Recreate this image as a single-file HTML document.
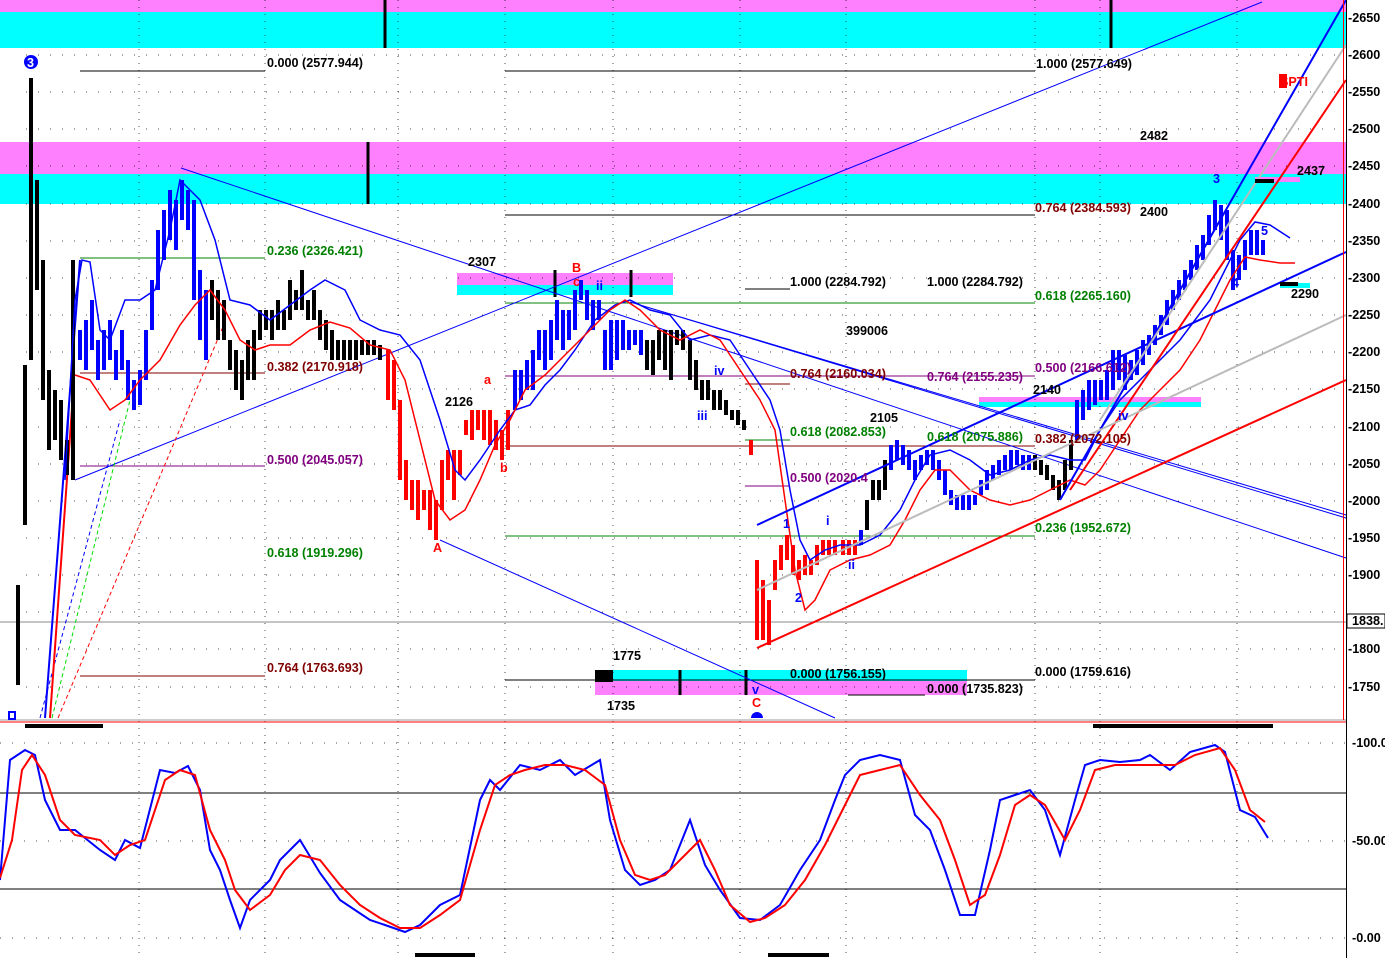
<!DOCTYPE html>
<html><head><meta charset="utf-8"><style>
html,body{margin:0;padding:0;background:#fff;width:1385px;height:958px;overflow:hidden}
svg{display:block}
text{font-family:"Liberation Sans",Arial,sans-serif;font-weight:bold;font-size:12.6px}
</style></head><body>
<svg width="1385" height="958" viewBox="0 0 1385 958" xmlns="http://www.w3.org/2000/svg">
<rect x="0" y="0" width="1346" height="12" fill="#ff80ff"/>
<rect x="0" y="12" width="1346" height="36" fill="#00ffff"/>
<rect x="0" y="142" width="1346" height="32" fill="#ff80ff"/>
<rect x="0" y="174" width="1346" height="30" fill="#00ffff"/>
<rect x="457" y="273" width="216" height="12" fill="#ff80ff"/>
<rect x="457" y="285" width="216" height="10" fill="#00ffff"/>
<rect x="595" y="670" width="372" height="11" fill="#00ffff"/>
<rect x="595" y="681" width="372" height="14" fill="#ff80ff"/>
<rect x="979" y="397" width="222" height="5" fill="#ff80ff"/>
<rect x="979" y="402" width="222" height="5" fill="#00ffff"/>
<rect x="1255" y="177" width="45" height="5" fill="#ff80ff"/>
<rect x="1280" y="283" width="30" height="5" fill="#00ffff"/>
<g stroke="#000" stroke-width="1" stroke-dasharray="1,11" opacity="0.7">
<path d="M26 55H1346M26 92H1346M26 129H1346M26 166H1346M26 204H1346M26 241H1346M26 278H1346M26 315H1346M26 352H1346M26 389H1346M26 427H1346M26 464H1346M26 501H1346M26 538H1346M26 575H1346M26 612H1346M26 649H1346M26 687H1346"/>
<path d="M0 743H1346M0 841H1346M0 938H1346"/>
</g>
<g stroke="#000" stroke-width="1" stroke-dasharray="1,6" opacity="0.7">
<path d="M139 0V958M265 0V958M398 0V958M505 0V958M613 0V958M740 0V958M846 0V958M1035 0V958M1100 0V958M1237 0V958"/>
</g>
<path d="M385 0V48M1111 0V48M368 142V204M555 270V297M631 270V297M680 670V695M746 670V695" stroke="#000" stroke-width="3"/>
<rect x="595" y="670" width="18" height="12" fill="#000"/>
<g stroke-width="1">
<path d="M80 71H265M505 71H1035M505 215H1035M745 289H790M505 680H1035M848 695H925" stroke="#000"/>
<path d="M80 258H265" stroke="#008000"/>
<path d="M505 303H1035M505 536H1035M745 440H790" stroke="#008000"/>
<path d="M80 373H265M80 676H265M505 446H1035M745 384H790" stroke="#800000"/>
<path d="M80 466H265M505 376H1035M745 486H790" stroke="#800080"/>
<path d="M0 622H1346" stroke="#888"/>
</g>
<g stroke="#0000ff" stroke-width="1" fill="none">
<path d="M181 168L1346 558M75 480L1262 2M440 540L835 718M630 302L1346 515M640 305L1346 518"/>
</g>
<polyline points="40,718 120,420" stroke="#0000ff" stroke-width="1" fill="none" stroke-dasharray="4,3"/>
<polyline points="52,718 130,400" stroke="#00dd00" stroke-width="1" fill="none" stroke-dasharray="4,3"/>
<polyline points="58,718 225,322" stroke="#ff0000" stroke-width="1" fill="none" stroke-dasharray="4,3"/>
<path d="M45 718L80 260" stroke="#0000ff" stroke-width="2"/>
<path d="M50 718L74 380" stroke="#ff0000" stroke-width="2"/>
<g stroke-width="4" fill="none">
<path stroke="#000" d="M18 585V685M25 365V525M31 78V360M37 180V290M43 260V400M49 370V450M55 390V440M61 400V460M67 440V475M73 260V480"/>
<path stroke="#0000ff" d="M80 330V360M86 320V370M92 300V350M98 340V380M104 330V370M110 320V360M116 350V380M122 330V370M128 360V400M134 380V410M140 370V405M146 330V380M152 280V330M158 230V290M164 210V260M170 190V240M176 200V250M182 180V220M188 190V230M194 200V300M200 270V340M206 290V360"/>
<path stroke="#000" d="M212 280V320M218 290V340M224 300V340M230 340V370M236 350V390M242 360V400M248 340V380M254 330V380M260 310V340M266 310V330M272 310V340M278 300V330M284 310V330M290 280V320M296 290V310M302 270V310M308 300V320M314 290V320M320 310V340M326 320V350M332 330V360M338 340V360M344 340V360M350 340V360M356 340V360M362 340V355M368 340V355M374 340V355M380 345V360"/>
<path stroke="#ff0000" d="M388 350V400M394 360V410M400 400V480M406 460V500M412 480V510M418 480V520M424 490V510M430 490V530M436 500V540M442 460V510M448 450V480M454 450V500M460 450V475M466 420V435M472 410V440M478 410V430M484 410V440M490 410V445M496 420V450M502 430V460M508 410V450"/>
<path stroke="#0000ff" d="M515 370V410M521 370V400M527 360V390M533 350V390M539 330V360M545 330V370M551 320V360M557 300V340M563 310V350M569 310V340M575 290V330M581 280V300M587 290V320M593 300V330M599 300V320M605 330V370M611 320V370M617 320V360M623 320V350M629 330V350M635 330V345M641 330V355"/>
<path stroke="#000" d="M647 340V370M653 340V375M659 330V360M665 330V370M671 330V380M677 330V345M683 330V350M690 340V380M696 360V390M702 380V400M708 380V400M714 390V410M720 390V410M726 400V415M732 410V420M738 410V425M744 420V430"/>
<path stroke="#ff0000" d="M751 440V455M757 560V640M763 580V640M769 600V645M775 560V590M781 545V570M787 535V560M793 545V575M799 560V580M805 555V575M811 560V575M817 545V565M823 540V555M829 540V555M835 540V555M843 540V555M849 540V555M855 540V555"/>
<path stroke="#000" d="M867 500V530M873 480V500M879 480V500M885 460V490M1035 455V470M1041 460V475M1047 465V480M1053 475V490M1059 480V500M1065 460V490M1071 440V470"/>
<path stroke="#0000ff" d="M861 530V545M891 445V470M897 440V460M903 445V465M909 450V470M915 460V480M921 455V470M927 450V465M933 450V470M939 460V480M945 470V495M951 490V505M957 495V510M963 495V510M969 495V510M975 495V505M981 480V495M987 470V490M993 465V480M999 460V475M1005 455V470M1011 450V470M1017 450V465M1023 455V470M1029 455V470M1077 400V440M1083 390V420M1089 380V410M1095 380V405M1101 380V400M1107 370V400M1113 350V390M1119 350V380M1125 355V390M1131 360V380M1137 350V375M1143 340V365M1149 335V355M1155 325V345M1161 315V335M1167 300V325M1173 290V310M1179 280V300M1185 270V290M1191 260V280M1197 245V270M1203 235V260M1209 215V245M1215 200V230M1221 205V240M1227 210V260M1233 250V290M1239 255V280M1245 240V270M1251 230V255M1257 230V255M1263 240V255"/>
</g>
<polyline fill="none" stroke="#0000ff" stroke-width="1.5" points="65,480 75,300 82,260 90,262 100,330 110,340 125,300 140,300 155,290 170,230 180,180 190,190 200,200 215,240 230,300 250,305 270,320 290,305 310,290 325,280 345,290 360,320 380,330 400,335 420,360 440,420 455,470 465,480 480,460 500,430 515,410 530,405 545,385 560,370 575,350 595,320 615,305 630,300 650,310 670,315 690,340 710,335 730,340 750,370 770,400 780,430 790,490 800,540 810,560 825,550 840,545 860,545 880,535 900,510 915,480 930,455 950,450 970,460 990,475 1010,470 1030,460 1050,455 1070,460 1085,460 1100,430 1120,400 1140,380 1160,360 1180,340 1195,320 1210,300 1225,270 1240,240 1255,222 1270,225 1290,238"/>
<polyline fill="none" stroke="#ff0000" stroke-width="1.5" points="75,375 90,380 110,410 125,400 140,380 160,360 180,325 195,305 210,290 225,310 240,340 255,350 270,345 290,345 310,330 330,322 350,328 370,345 390,350 405,380 420,440 435,500 450,520 465,510 480,480 495,445 510,420 525,390 545,375 570,350 590,330 610,310 625,300 640,310 660,330 680,340 700,330 720,340 740,370 760,400 775,430 785,500 795,570 805,610 815,600 830,570 850,560 870,555 890,545 905,520 920,490 935,470 950,470 970,490 990,500 1010,505 1030,500 1050,490 1070,480 1085,485 1100,470 1120,440 1140,410 1160,390 1180,370 1200,340 1215,310 1230,280 1245,257 1260,260 1280,263 1295,263"/>
<path d="M757 525L1346 252M1060 500L1346 0" stroke="#0000ff" stroke-width="2"/>
<path d="M757 648L1346 380M1070 490L1346 80" stroke="#ff0000" stroke-width="2"/>
<path d="M757 590L1346 315M1100 420L1346 45" stroke="#bbb" stroke-width="2"/>
<path d="M1255 181H1274M1280 284H1298" stroke="#000" stroke-width="4"/>
<rect x="0" y="719" width="1346" height="2" fill="#ccc"/>
<path d="M0 722H1346" stroke="#ff0000" stroke-width="1"/>
<path d="M25 726H103M1093 726H1273M415 955H475M768 955H829" stroke="#000" stroke-width="4"/>
<path d="M0 793H1346M0 889H1346" stroke="#000" stroke-width="1"/>
<polyline fill="none" stroke="#0000ff" stroke-width="2" points="0,880 10,760 25,750 35,755 45,800 60,830 75,830 100,850 115,860 125,840 140,848 160,770 175,773 188,766 200,790 210,850 220,870 230,900 240,928 250,900 270,880 280,860 300,840 320,873 340,900 355,910 370,920 385,925 405,932 420,925 440,905 460,895 480,800 490,780 500,790 520,765 540,770 560,760 575,775 600,760 610,820 625,870 640,885 655,880 670,870 690,820 705,865 720,890 740,918 760,920 780,905 800,870 820,840 835,800 845,775 860,760 880,755 900,760 915,815 930,830 945,870 960,915 975,915 990,850 1000,800 1015,795 1030,790 1045,810 1060,855 1075,800 1085,765 1100,760 1120,762 1140,760 1150,755 1170,770 1190,752 1215,745 1225,752 1240,810 1255,817 1268,838"/>
<polyline fill="none" stroke="#ff0000" stroke-width="2" points="0,878 12,840 22,770 32,755 45,775 60,820 75,835 100,840 115,855 130,845 145,840 165,780 180,770 195,775 210,830 225,860 235,890 250,910 270,895 285,870 300,855 320,860 340,885 360,905 380,918 400,928 420,928 440,915 460,900 480,830 495,785 510,775 525,770 545,765 565,765 585,770 605,785 620,840 635,875 650,880 665,875 680,860 700,840 715,870 730,905 750,922 765,918 785,905 805,880 825,845 845,805 860,775 880,770 900,765 920,795 940,820 955,860 970,905 985,895 1000,855 1015,805 1030,795 1045,805 1065,840 1080,810 1095,770 1115,765 1135,765 1155,765 1175,765 1195,755 1220,748 1235,770 1250,810 1265,822"/>
<rect x="1346" y="0" width="39" height="958" fill="#fff"/>
<path d="M1346.5 0V958" stroke="#000"/><path d="M1343.5 0V720" stroke="#ff0000"/>
<g fill="#000" font-size="12">
<text x="1348" y="22">-2650</text><text x="1348" y="59">-2600</text><text x="1348" y="96">-2550</text><text x="1348" y="133">-2500</text><text x="1348" y="170">-2450</text><text x="1348" y="208">-2400</text><text x="1348" y="245">-2350</text><text x="1348" y="282">-2300</text><text x="1348" y="319">-2250</text><text x="1348" y="356">-2200</text><text x="1348" y="393">-2150</text><text x="1348" y="431">-2100</text><text x="1348" y="468">-2050</text><text x="1348" y="505">-2000</text><text x="1348" y="542">-1950</text><text x="1348" y="579">-1900</text><text x="1348" y="653">-1800</text><text x="1348" y="691">-1750</text>
<text x="1352" y="747">-100.0</text><text x="1352" y="845">-50.00</text><text x="1352" y="942">-0.00</text>
</g>
<rect x="1347" y="614" width="38" height="14" fill="#fff" stroke="#000"/>
<text x="1352" y="625" font-size="11">1838.</text>
<circle cx="31" cy="62" r="7" fill="#0000ff"/><text x="27" y="67" fill="#fff" font-size="11">3</text>
<text x="267" y="67" fill="#000">0.000 (2577.944)</text>
<text x="1036" y="68" fill="#000">1.000 (2577.649)</text>
<text x="267" y="255" fill="#008000">0.236 (2326.421)</text>
<text x="267" y="371" fill="#800000">0.382 (2170.918)</text>
<text x="267" y="464" fill="#800080">0.500 (2045.057)</text>
<text x="267" y="557" fill="#008000">0.618 (1919.296)</text>
<text x="267" y="672" fill="#800000">0.764 (1763.693)</text>
<text x="1035" y="212" fill="#800000">0.764 (2384.593)</text>
<text x="790" y="286" fill="#000">1.000 (2284.792)</text>
<text x="927" y="286" fill="#000">1.000 (2284.792)</text>
<text x="1035" y="300" fill="#008000">0.618 (2265.160)</text>
<text x="1035" y="372" fill="#800080">0.500 (2166.612)</text>
<text x="790" y="378" fill="#800000">0.764 (2160.034)</text>
<text x="927" y="381" fill="#800080">0.764 (2155.235)</text>
<text x="790" y="436" fill="#008000">0.618 (2082.853)</text>
<text x="927" y="441" fill="#008000">0.618 (2075.886)</text>
<text x="1035" y="443" fill="#800000">0.382 (2072.105)</text>
<text x="790" y="482" fill="#800080">0.500 (2020.4</text>
<text x="1035" y="532" fill="#008000">0.236 (1952.672)</text>
<text x="790" y="678" fill="#000">0.000 (1756.155)</text>
<text x="1035" y="676" fill="#000">0.000 (1759.616)</text>
<text x="927" y="693" fill="#000">0.000 (1735.823)</text>
<text x="846" y="335" fill="#000" font-size="20">399006</text>
<text x="468" y="266" fill="#000">2307</text>
<text x="445" y="406" fill="#000">2126</text>
<text x="870" y="422" fill="#000">2105</text>
<text x="1033" y="394" fill="#000">2140</text>
<text x="1140" y="140" fill="#000">2482</text>
<text x="1140" y="216" fill="#000">2400</text>
<text x="1297" y="175" fill="#000">2437</text>
<text x="1291" y="298" fill="#000">2290</text>
<text x="613" y="660" fill="#000">1775</text>
<text x="607" y="710" fill="#000">1735</text>
<g fill="#ff0000"><text x="572" y="272">B</text><text x="573" y="286">c</text><text x="484" y="384">a</text><text x="500" y="472">b</text><text x="433" y="552">A</text><text x="752" y="707">C</text></g>
<rect x="1279" y="74" width="8" height="14" fill="#ff0000"/>
<text x="1280" y="86" fill="#ff0000" font-size="13">SPTI</text>
<g fill="#0000ff" font-weight="normal"><text x="596" y="290">ii</text><text x="714" y="375">iv</text><text x="697" y="420">iii</text><text x="1213" y="183">3</text><text x="1232" y="287">4</text><text x="1261" y="235">5</text><text x="783" y="528">1</text><text x="795" y="602">2</text><text x="826" y="525">i</text><text x="848" y="569">ii</text><text x="752" y="694">v</text><text x="1118" y="420">iv</text></g>
<path d="M751 718a6 6 0 0 1 12 0z" fill="#0000ff"/>
<rect x="9" y="712" width="6" height="7" fill="none" stroke="#0000ff" stroke-width="2"/>
</svg>
</body></html>
